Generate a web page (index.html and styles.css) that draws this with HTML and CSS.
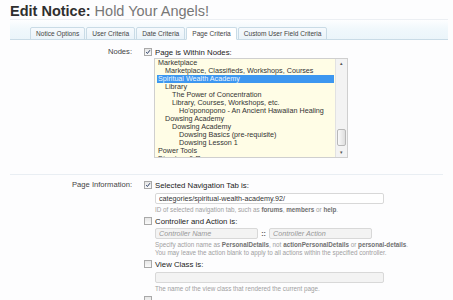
FILE: index.html
```html
<!DOCTYPE html>
<html lang="en">
<head>
	<meta charset="UTF-8">
	<title>Edit Notice: Hold Your Angels!</title>
	<link rel="stylesheet" href="styles.css">
</head>
<body>
	<h1 class="title"><b>Edit Notice:</b> Hold Your Angels!</h1>

	<div class="tabbar">
		<ul class="tabs">
			<li>Notice Options</li>
			<li>User Criteria</li>
			<li>Date Criteria</li>
			<li class="active">Page Criteria</li>
			<li>Custom User Field Criteria</li>
		</ul>
	</div>

	<dl class="ctrl">
		<dt>Nodes:</dt>
		<dd>
			<label class="check"><span class="box on"><svg viewBox="0 0 8 8"><path d="M1.6 4.2 L3.2 6 L6.6 1.6" fill="none" stroke="#2b3f66" stroke-width="1.3"/></svg></span>Page is Within Nodes:</label>
			<div class="listbox">
				<div class="options">
					<div class="opt">Marketplace</div>
					<div class="opt l1">Marketplace, Classifieds, Workshops, Courses</div>
					<div class="opt selected">Spiritual Wealth Academy</div>
					<div class="opt l1">Library</div>
					<div class="opt l2">The Power of Concentration</div>
					<div class="opt l2">Library, Courses, Workshops, etc.</div>
					<div class="opt l3">Ho'oponopono - An Ancient Hawaiian Healing</div>
					<div class="opt l1">Dowsing Academy</div>
					<div class="opt l2">Dowsing Academy</div>
					<div class="opt l3">Dowsing Basics (pre-requisite)</div>
					<div class="opt l3">Dowsing Lesson 1</div>
					<div class="opt">Power Tools</div>
					<div class="opt">Directory &amp; Resources</div>
				</div>
				<div class="scrollbar">
					<span class="arrow">&#9652;</span>
					<span class="track"><span class="thumb"></span></span>
					<span class="arrow">&#9662;</span>
				</div>
			</div>
		</dd>
	</dl>

	<hr class="sep">

	<dl class="ctrl info">
		<dt>Page Information:</dt>
		<dd>
			<label class="check"><span class="box on"><svg viewBox="0 0 8 8"><path d="M1.6 4.2 L3.2 6 L6.6 1.6" fill="none" stroke="#2b3f66" stroke-width="1.3"/></svg></span>Selected Navigation Tab is:</label>
			<div class="indent">
				<input class="field wide" type="text" value="categories/spiritual-wealth-academy.92/">
				<p class="hint">ID of selected navigation tab, such as <b>forums</b>, <b>members</b> or <b>help</b>.</p>
			</div>

			<label class="check"><span class="box"></span>Controller and Action is:</label>
			<div class="indent">
				<div class="pair">
					<input class="field off" type="text" placeholder="Controller Name">
					<span class="dots">::</span>
					<input class="field off" type="text" placeholder="Controller Action">
				</div>
				<p class="hint">Specify action name as <b>PersonalDetails</b>, not <b>actionPersonalDetails</b> or <b>personal-details</b>.<br>You may leave the action blank to apply to all actions within the specified controller.</p>
			</div>

			<label class="check"><span class="box"></span>View Class is:</label>
			<div class="indent">
				<input class="field wide off" type="text">
				<p class="hint">The name of the view class that rendered the current page.</p>
			</div>

			<label class="check"><span class="box"></span>&nbsp;</label>
		</dd>
	</dl>
</body>
</html>
```

FILE: styles.css
```css
body {
	margin: 0;
	background: #fdfdfe;
	font-family: 'Liberation Sans', Arial, sans-serif;
	color: #333;
	overflow: hidden;
}

.title {
	margin: 0 5px 0 10px;
	padding: 3px 0 0;
	font-size: 14.5px;
	line-height: 16px;
	font-weight: normal;
	color: #777;
	border-bottom: 1px solid #eceff3;
}

.title b {
	color: #2f2f2f;
}

.tabbar {
	margin: 0 5px 0 10px;
	height: 19px;
	border-bottom: 1px solid #c9dbe6;
	background: linear-gradient(to bottom, #fdfeff 0%, #f1f8fc 45%, #ebf5fa 100%);
	display: flex;
	align-items: flex-end;
}

.tabs {
	list-style: none;
	margin: 0 0 -1px 20px;
	padding: 0;
	display: flex;
	gap: 1px;
}

.tabs li {
	height: 11px;
	line-height: 11px;
	padding: 0 5px;
	font-size: 6.6px;
	color: #444;
	border: 1px solid #c9dbe6;
	border-radius: 2px 2px 0 0;
	background: linear-gradient(to bottom, #f6fafd, #eaf3f9);
}

.tabs li.active {
	background: #fff;
	border-bottom-color: #fff;
}

.ctrl {
	display: flex;
	margin: 7px 0 0;
}

.ctrl dt {
	width: 132px;
	flex: none;
	text-align: right;
	font-size: 7.6px;
	line-height: 10px;
	color: #444;
}

.ctrl dd {
	margin: 0 0 0 12px;
}

.check {
	display: flex;
	align-items: center;
	height: 10px;
	font-size: 7.8px;
	color: #222;
}

.box {
	width: 6px;
	height: 6px;
	margin-right: 3px;
	border: 1px solid #a9a9a9;
	background: linear-gradient(#e6e6e6, #fafafa);
	display: flex;
}

.box svg {
	width: 6px;
	height: 6px;
}

.listbox {
	display: flex;
	margin-top: 1px;
	margin-left: 10px;
	width: 192px;
	height: 98px;
	border: 1px solid #cfcfcf;
	background: #fffde6;
	overflow: hidden;
}

.options {
	flex: 1;
	padding-left: 2px;
}

.opt {
	height: 8px;
	line-height: 8px;
	font-size: 7.2px;
	color: #333;
	white-space: nowrap;
	padding-left: 1px;
}

.opt.l1 { padding-left: 8px; }
.opt.l2 { padding-left: 15px; }
.opt.l3 { padding-left: 22px; }

.opt.selected {
	background: #3d97f0;
	color: #eef6ff;
	margin-right: 1px;
}

.scrollbar {
	width: 11px;
	flex: none;
	display: flex;
	flex-direction: column;
	background: #f3f3f3;
	border-left: 1px solid #e2e2e2;
}

.arrow {
	height: 9px;
	font-size: 5px;
	line-height: 9px;
	text-align: center;
	color: #555;
}

.track {
	flex: 1;
	display: flex;
	flex-direction: column;
	justify-content: flex-end;
	padding: 0 1px 2px;
}

.thumb {
	height: 15px;
	border: 1px solid #b8b8b8;
	border-radius: 2px;
	background: linear-gradient(to right, #fafafa, #dedede);
}

.sep {
	margin: 16px 10px 0;
	border: 0;
	border-top: 1px solid #e9eef3;
}

.info {
	margin-top: 5px;
}

.indent {
	padding-left: 11px;
}

.field {
	display: block;
	box-sizing: border-box;
	height: 11px;
	margin: 3px 0 0;
	padding: 0 3px;
	border: 1px solid #d8d8d8;
	border-radius: 2px;
	background: #fff;
	font-family: inherit;
	font-size: 7.2px;
	color: #333;
	outline: none;
}

.field.wide {
	width: 229px;
}

.field.off {
	background: #f3f3f3;
}

.field::placeholder {
	font-style: italic;
	color: #999;
}

.pair {
	display: flex;
	align-items: center;
	margin-top: 2px;
}

.pair .field {
	width: 103px;
	margin: 0;
}

.dots {
	width: 11px;
	text-align: center;
	font-size: 7px;
	font-weight: bold;
	color: #555;
}

.hint {
	margin: 2px 0 2px;
	font-size: 6.3px;
	line-height: 8px;
	color: #a0a0a0;
}

.hint b {
	color: #707070;
}
```
